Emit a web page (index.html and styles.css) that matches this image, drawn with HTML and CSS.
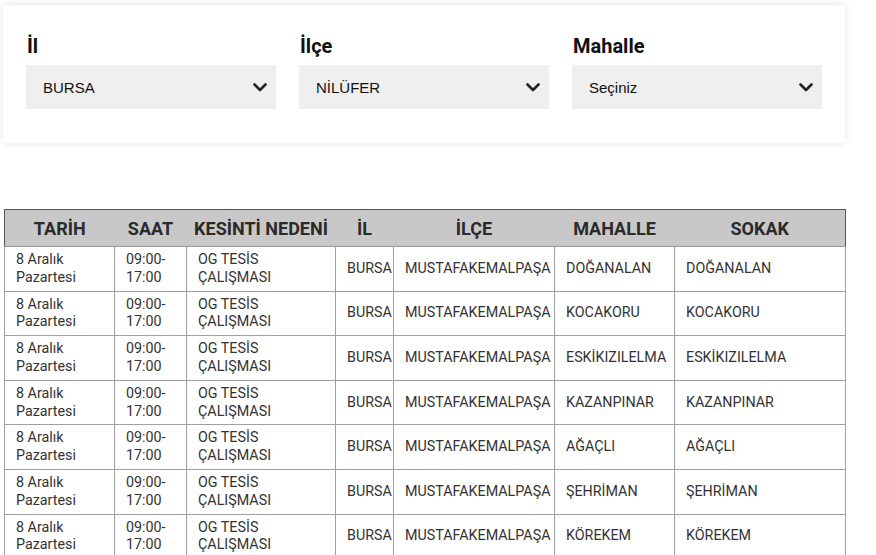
FILE: index.html
```html
<!DOCTYPE html>
<html lang="tr">
<head>
<meta charset="utf-8">
<link rel="stylesheet" href="styles.css">
</head>
<body>
<div class="page">
  <div class="filter-card">
    <div class="field">
      <div class="field-label">İl</div>
      <div class="select"><span>BURSA</span><svg class="chev" width="14" height="9" viewBox="0 0 14 9"><polyline points="1.5,1.5 7,7 12.5,1.5" fill="none" stroke="#222" stroke-width="2.6" stroke-linecap="round" stroke-linejoin="round"/></svg></div>
    </div>
    <div class="field">
      <div class="field-label">İlçe</div>
      <div class="select"><span>NİLÜFER</span><svg class="chev" width="14" height="9" viewBox="0 0 14 9"><polyline points="1.5,1.5 7,7 12.5,1.5" fill="none" stroke="#222" stroke-width="2.6" stroke-linecap="round" stroke-linejoin="round"/></svg></div>
    </div>
    <div class="field">
      <div class="field-label">Mahalle</div>
      <div class="select"><span>Seçiniz</span><svg class="chev" width="14" height="9" viewBox="0 0 14 9"><polyline points="1.5,1.5 7,7 12.5,1.5" fill="none" stroke="#222" stroke-width="2.6" stroke-linecap="round" stroke-linejoin="round"/></svg></div>
    </div>
  </div>

  <table class="outages">
    <colgroup>
      <col class="c-date"><col class="c-time"><col class="c-reason"><col class="c-il"><col class="c-ilce"><col class="c-mah"><col class="c-sokak">
    </colgroup>
    <thead>
      <tr><th>TARİH</th><th>SAAT</th><th>KESİNTİ NEDENİ</th><th>İL</th><th>İLÇE</th><th>MAHALLE</th><th>SOKAK</th></tr>
    </thead>
    <tbody>
      <tr><td>8 Aralık<br>Pazartesi</td><td>09:00-<br>17:00</td><td>OG TESİS<br>ÇALIŞMASI</td><td>BURSA</td><td>MUSTAFAKEMALPAŞA</td><td>DOĞANALAN</td><td>DOĞANALAN</td></tr>
      <tr><td>8 Aralık<br>Pazartesi</td><td>09:00-<br>17:00</td><td>OG TESİS<br>ÇALIŞMASI</td><td>BURSA</td><td>MUSTAFAKEMALPAŞA</td><td>KOCAKORU</td><td>KOCAKORU</td></tr>
      <tr><td>8 Aralık<br>Pazartesi</td><td>09:00-<br>17:00</td><td>OG TESİS<br>ÇALIŞMASI</td><td>BURSA</td><td>MUSTAFAKEMALPAŞA</td><td>ESKİKIZILELMA</td><td>ESKİKIZILELMA</td></tr>
      <tr><td>8 Aralık<br>Pazartesi</td><td>09:00-<br>17:00</td><td>OG TESİS<br>ÇALIŞMASI</td><td>BURSA</td><td>MUSTAFAKEMALPAŞA</td><td>KAZANPINAR</td><td>KAZANPINAR</td></tr>
      <tr><td>8 Aralık<br>Pazartesi</td><td>09:00-<br>17:00</td><td>OG TESİS<br>ÇALIŞMASI</td><td>BURSA</td><td>MUSTAFAKEMALPAŞA</td><td>AĞAÇLI</td><td>AĞAÇLI</td></tr>
      <tr><td>8 Aralık<br>Pazartesi</td><td>09:00-<br>17:00</td><td>OG TESİS<br>ÇALIŞMASI</td><td>BURSA</td><td>MUSTAFAKEMALPAŞA</td><td>ŞEHRİMAN</td><td>ŞEHRİMAN</td></tr>
      <tr><td>8 Aralık<br>Pazartesi</td><td>09:00-<br>17:00</td><td>OG TESİS<br>ÇALIŞMASI</td><td>BURSA</td><td>MUSTAFAKEMALPAŞA</td><td>KÖREKEM</td><td>KÖREKEM</td></tr>
    </tbody>
  </table>
</div>
</body>
</html>
```

FILE: styles.css
```css
* { box-sizing: border-box; }

html, body {
  margin: 0;
  background: #ffffff;
}

body {
  font-family: Roboto, "Liberation Sans", Arial, sans-serif;
  color: #222;
  overflow: hidden;
}

.page {
  padding: 5px 0 0 3px;
}

.filter-card {
  width: 842px;
  height: 138px;
  background: #fff;
  box-shadow: 0 0 7px rgba(0, 0, 0, 0.13);
  padding: 29px 23px 0 23px;
  display: grid;
  grid-template-columns: 250px 250px 250px;
  column-gap: 23px;
  align-items: start;
}

.field {
  display: flex;
  flex-direction: column;
}

.field-label {
  font-family: Roboto, "Liberation Sans", sans-serif;
  font-weight: 700;
  font-size: 20px;
  line-height: 24px;
  color: #111;
  margin-bottom: 7px;
  padding-left: 1px;
}

.select {
  height: 44px;
  background: #efefef;
  display: flex;
  align-items: center;
  justify-content: space-between;
  padding: 0 9px 0 17px;
  font-family: "Liberation Sans", Arial, sans-serif;
  font-size: 15px;
  color: #111;
}

.chev {
  display: block;
}

.outages {
  margin: 66px 0 0 1px;
  width: 841px;
  table-layout: fixed;
  border-collapse: collapse;
  border: 1px solid #555;
}

.c-date { width: 110px; }
.c-time { width: 72px; }
.c-reason { width: 149px; }
.c-il { width: 58px; }
.c-ilce { width: 161px; }
.c-mah { width: 120px; }
.c-sokak { width: 171px; }

.outages th {
  background: #c8c8c8;
  height: 37px;
  font-family: Roboto, "Liberation Sans", sans-serif;
  font-weight: 700;
  font-size: 18px;
  color: #2a2a2a;
  text-align: center;
  padding: 0;
  border-bottom: 1px solid #999;
  white-space: nowrap;
}

.outages td {
  border: 1px solid #a0a0a0;
  padding: 4px 0 4px 11px;
  font-size: 14.3px;
  line-height: 17.8px;
  color: #333;
  vertical-align: middle;
  text-align: left;
  white-space: nowrap;
  overflow: visible;
}
```
